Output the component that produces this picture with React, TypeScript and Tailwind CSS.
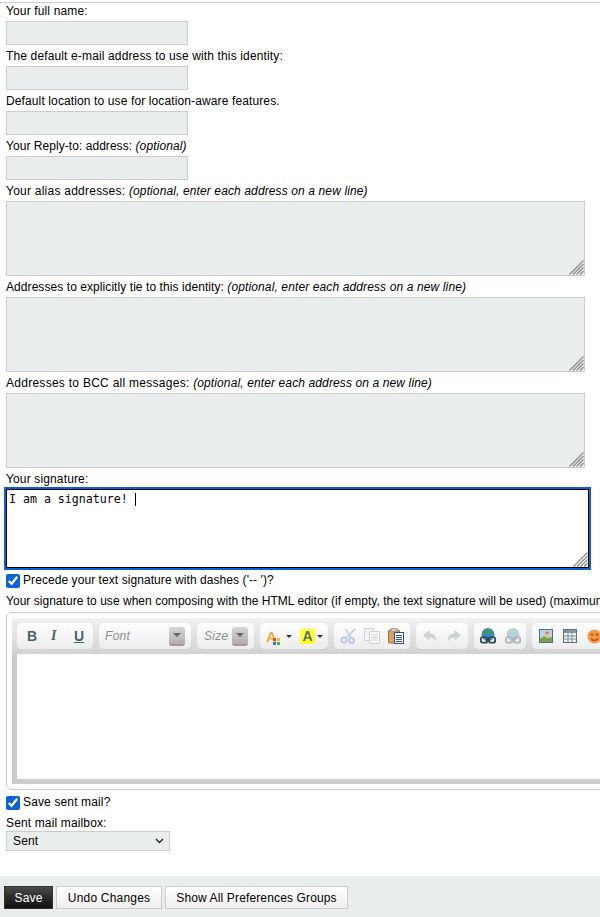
import type { ReactNode } from "react";

// tracking is per label since the reference's hinted Arial runs wider on some lines than others
const Label = ({ t = "tracking-[0.14px]", children }: { t?: string; children: ReactNode }) => (
  <div className={`h-[21px] pt-[1px] pl-[6px] text-[12px] leading-[21px] text-black whitespace-nowrap ${t}`}>{children}</div>
);

const TextInput = () => (
  <div className="pl-[6px]">
    <input className="block w-[182px] h-[24px] bg-[#e9eded] border border-[#cccccc]" />
  </div>
);

// windows style resize grip, the browser's own one is much smaller
const Grip = ({ className }: { className: string }) => (
  <svg width="15" height="15" viewBox="0 0 15 15" className={`absolute pointer-events-none ${className}`} stroke="#8a8a8a" strokeWidth="1.2">
    <path d="M0.500 14.500L14.500 0.500M4 14.500L14.500 4M7.500 14.500L14.500 7.500M11 14.500L14.500 11" />
  </svg>
);

const Area = () => (
  <div className="relative ml-[6px] w-[579px]">
    <textarea className="block w-[579px] h-[75px] bg-[#e9eded] border border-[#cccccc] resize-none" />
    <Grip className="right-[1px] bottom-[1px]" />
  </div>
);

const Opt = ({ children }: { children: ReactNode }) => (
  <em className="italic tracking-[0.12px]">{children}</em>
);

const Group = ({ w, children }: { w: number; children: ReactNode }) => (
  <div
    className="h-[26px] shrink-0 rounded-[5px] bg-gradient-to-b from-[#ffffff] to-[#ececec] flex items-center"
    style={{ width: w }}
  >
    {children}
  </div>
);

const Drop = () => (
  <div className="w-[16px] h-[19px] rounded-[3px] bg-gradient-to-b from-[#d8d3d3] to-[#b5aeae] border-b-2 border-[#a09a9a] flex items-center justify-center">
    <span className="w-0 h-0 border-x-[4px] border-x-transparent border-t-[4px] border-t-[#666]" />
  </div>
);

const Caret = () => (
  <span className="ml-[2px] w-0 h-0 border-x-[3px] border-x-transparent border-t-[3px] border-t-[#333]" />
);

const Cut = () => (
  <svg width="16" height="16" viewBox="0 0 16 16" fill="none">
    <path d="M6 1l5 9M15 1L6 10" stroke="#d0d4da" strokeWidth="2" />
    <circle cx="4" cy="12" r="2.500" stroke="#bccaea" strokeWidth="2" />
    <circle cx="11.500" cy="12.500" r="2.500" stroke="#bccaea" strokeWidth="2" />
  </svg>
);

const Copy = () => (
  <svg width="16" height="16" viewBox="0 0 16 16">
    <rect x="0.500" y="0.500" width="9" height="12" fill="#f4f4f4" stroke="#d4d4d4" />
    <rect x="5.500" y="3.500" width="10" height="12" fill="#fafafa" stroke="#cfcfcf" />
    <path d="M7 7h7M7 9.500h7M7 12h7" stroke="#cfd4d4" />
  </svg>
);

const Paste = () => (
  <svg width="16" height="16" viewBox="0 0 16 16">
    <rect x="0.500" y="2" width="11" height="13" rx="1" fill="#d9a05f" stroke="#a87437" />
    <rect x="3" y="0.500" width="6" height="3" fill="#c9c9c9" stroke="#888" strokeWidth="0.600" />
    <rect x="6.500" y="4.500" width="9" height="11" fill="#fff" stroke="#2f4fb5" />
    <path d="M8 7.500h6M8 9.500h6M8 11.500h6M8 13.500h6" stroke="#2f4fb5" />
  </svg>
);

const Arrow = ({ flip }: { flip?: boolean }) => (
  <svg width="14" height="12" viewBox="0 0 14 12" className={flip ? "-scale-x-100" : ""}>
    <path d="M6.500 0L0 5.200 6.500 10.500V7.500c3 0 5 1 6.500 4C13.500 6 10.500 3.200 6.500 3.200z" fill="#cdd2d2" />
  </svg>
);

const Link = ({ faded }: { faded?: boolean }) => (
  <svg width="16" height="16" viewBox="0 0 16 16" className={faded ? "opacity-35" : ""}>
    <circle cx="8" cy="6.500" r="6.500" fill="#3f87d8" />
    <path d="M3 3c2-2 4-2 5-1s0 4-2 4-3 2-3-3zM9 1.500c2 0 4 2 4.500 4.500L10 6z" fill="#3d9a3d" />
    <rect x="0.800" y="9.200" width="6.500" height="5.500" rx="2" fill="none" stroke="#2f4b4b" strokeWidth="1.800" />
    <rect x="8.700" y="9.200" width="6.500" height="5.500" rx="2" fill="none" stroke="#2f4b4b" strokeWidth="1.800" />
    <path d="M5.500 12h5" stroke="#2f4b4b" strokeWidth="1.800" />
  </svg>
);

const Picture = () => (
  <svg width="14" height="14" viewBox="0 0 14 14">
    <rect x="0.500" y="0.500" width="13" height="13" fill="#b8d5ef" stroke="#55707a" />
    <path d="M1 13V10l4-3 3 2 5-1v5z" fill="#7fa04e" />
    <rect x="6" y="4" width="4" height="4" fill="#f0c276" />
    <path d="M5.500 4.500L8 2l2.500 2.500z" fill="#d2693c" />
  </svg>
);

const Table = () => (
  <svg width="14" height="14" viewBox="0 0 14 14">
    <rect x="0.500" y="0.500" width="13" height="13" fill="#eef1f3" stroke="#5f7178" />
    <rect x="1" y="1" width="12" height="3" fill="#8595a0" />
    <path d="M1 7h12M1 10h12M5 4v9M9 4v9" stroke="#7e8e96" />
  </svg>
);

const Smiley = () => (
  <svg width="15" height="15" viewBox="0 0 15 15">
    <circle cx="7.500" cy="7.500" r="7" fill="#f49a4a" />
    <rect x="3.500" y="4.500" width="3" height="2" fill="#a95a20" />
    <rect x="8.500" y="4.500" width="3" height="2" fill="#a95a20" />
    <path d="M4 9.500c2 2.500 5 2.500 7 0" stroke="#c8401c" strokeWidth="1.500" fill="none" />
  </svg>
);

const Toolbar = () => (
  <div className="h-[36px] flex gap-[6px] pt-[5px] pl-[5px] bg-gradient-to-b from-[#f1f1f1] to-[#d2d2d2]">
    <Group w={76}>
      <span className="w-[26px] pl-[10px] font-bold text-[14px] leading-none text-[#456468]">B</span>
      <span className="w-[25px] pl-[8px] italic font-bold text-[14px] leading-none text-[#456468] font-['Liberation_Serif',serif]">I</span>
      <span className="pl-[6px] font-bold text-[14px] leading-none text-[#456468] underline">U</span>
    </Group>
    <Group w={92}>
      <span className="pl-[6px] w-[70px] italic text-[12px] tracking-[0.3px] text-[#8a9090]">Font</span>
      <Drop />
    </Group>
    <Group w={57}>
      <span className="pl-[7px] w-[35px] italic text-[12px] tracking-[0.3px] text-[#8a9090]">Size</span>
      <Drop />
    </Group>
    <Group w={68}>
      <span className="relative pl-[6px] w-[24px] font-bold text-[15px] leading-none text-[#f0a844]">
        A
        <span className="absolute left-[13px] top-[9px] w-[3px] h-[3px] bg-[#e04a3a]" />
        <span className="absolute left-[17px] top-[9px] w-[3px] h-[3px] bg-[#e8c020]" />
        <span className="absolute left-[13px] top-[13px] w-[3px] h-[3px] bg-[#3a7ae0]" />
        <span className="absolute left-[17px] top-[13px] w-[3px] h-[3px] bg-[#50b050]" />
      </span>
      <Caret />
      <span className="ml-[8px] w-[15px] h-[15px] bg-[#ffff33] text-center font-bold text-[14px] leading-[15px] text-[#55706f]">A</span>
      <Caret />
    </Group>
    <Group w={76}>
      <div className="flex gap-[8px] pl-[6px]">
        <Cut />
        <Copy />
        <Paste />
      </div>
    </Group>
    <Group w={52}>
      <div className="flex gap-[10px] pl-[7px]">
        <Arrow />
        <Arrow flip />
      </div>
    </Group>
    <Group w={52}>
      <div className="flex gap-[9px] pl-[6px]">
        <Link />
        <Link faded />
      </div>
    </Group>
    <Group w={90}>
      <div className="flex gap-[10px] pl-[7px] items-center">
        <Picture />
        <Table />
        <Smiley />
      </div>
    </Group>
  </div>
);

export default function App() {
  return (
    <div className="w-[600px] h-[917px] overflow-hidden bg-white font-['Liberation_Sans',Arial,sans-serif] flex flex-col">
      <div className="h-[3px] -mb-[3px] pt-[2px]">
        <div className="h-[1px] bg-[#cccccc]" />
      </div>

      <Label>Your full name:</Label>
      <TextInput />
      <Label>The default e-mail address to use with this identity:</Label>
      <TextInput />
      <Label t="tracking-[0.12px]">Default location to use for location-aware features.</Label>
      <TextInput />
      <Label t="tracking-[0.05px]">Your Reply-to: address: <Opt>(optional)</Opt></Label>
      <TextInput />
      <Label t="tracking-[0.24px]">Your alias addresses: <Opt>(optional, enter each address on a new line)</Opt></Label>
      <Area />
      <Label t="tracking-[0.07px]">Addresses to explicitly tie to this identity: <Opt>(optional, enter each address on a new line)</Opt></Label>
      <Area />
      <Label t="tracking-[0.27px]">Addresses to BCC all messages: <Opt>(optional, enter each address on a new line)</Opt></Label>
      <Area />

      <Label>Your signature:</Label>
      <div className="relative ml-[6px] w-[583px]">
        <textarea
          defaultValue="I am a signature! "
          className="block w-[583px] h-[79px] px-[2px] py-[2px] text-[11.6px] leading-[14px] text-black font-['DejaVu_Sans_Mono',monospace] border border-black outline-2 outline-[#0a5fd8] resize-none"
        />
        <span className="absolute left-[129px] top-[4px] w-[1px] h-[13px] bg-black" />
        <Grip className="right-[1px] bottom-[1px]" />
      </div>

      <label className="flex items-center h-[18px] mt-[4px] pl-[6px] gap-[3px] text-[12px] tracking-[0.07px] text-black whitespace-nowrap">
        <input type="checkbox" defaultChecked className="w-[14px] h-[14px] accent-[#0b62d6]" />
        <span className="mb-[3px]">Precede your text signature with dashes ('-- ')?</span>
      </label>
      <Label t="tracking-[0.03px]">Your signature to use when composing with the HTML editor (if empty, the text signature will be used) (maximum 255 characters)</Label>

      <div className="ml-[6px] mt-[1px] w-[640px] h-[178px] shrink-0 border border-[#cccccc] rounded-[5px] p-[5px] pr-0">
        <Toolbar />
        <div className="h-[130px] bg-white border-l-[5px] border-b-[5px] border-[#cccccc]" />
      </div>

      <label className="flex items-center h-[18px] mt-[4px] pl-[6px] gap-[3px] text-[12px] tracking-[0.14px] text-black">
        <input type="checkbox" defaultChecked className="w-[14px] h-[14px] accent-[#0b62d6]" />
        <span className="mb-[2px]">Save sent mail?</span>
      </label>
      <div className="h-[18px] mt-[1px] pl-[6px] text-[12px] leading-[21px] tracking-[0.14px] text-black">Sent mail mailbox:</div>
      <div className="relative ml-[6px] w-[164px]">
        <select className="block w-[164px] h-[20px] pl-[6px] appearance-none bg-[#e9eded] border border-[#cccccc] text-[12px] tracking-[0.14px] text-black">
          <option>Sent</option>
        </select>
        <svg width="9" height="6" viewBox="0 0 9 6" fill="none" stroke="#222" strokeWidth="1.400" className="absolute right-[6px] top-[7px] pointer-events-none">
          <path d="M1 1l3.500 3.500L8 1" />
        </svg>
      </div>

      <div className="mt-auto h-[41px] bg-[#e9eded] flex gap-[3px] pt-[10px] pl-[4px]">
        <button className="w-[49px] h-[23px] bg-gradient-to-b from-[#4a4a4a] to-[#111111] border border-[#333] text-[12px] tracking-[0.14px] text-white">Save</button>
        <button className="w-[106px] h-[23px] bg-gradient-to-b from-[#ffffff] to-[#eeeeee] border border-[#cccccc] text-[12px] tracking-[0.2px] text-black">Undo Changes</button>
        <button className="w-[183px] h-[23px] bg-gradient-to-b from-[#ffffff] to-[#eeeeee] border border-[#cccccc] text-[12px] tracking-[0.14px] text-black">Show All Preferences Groups</button>
      </div>
    </div>
  );
}
